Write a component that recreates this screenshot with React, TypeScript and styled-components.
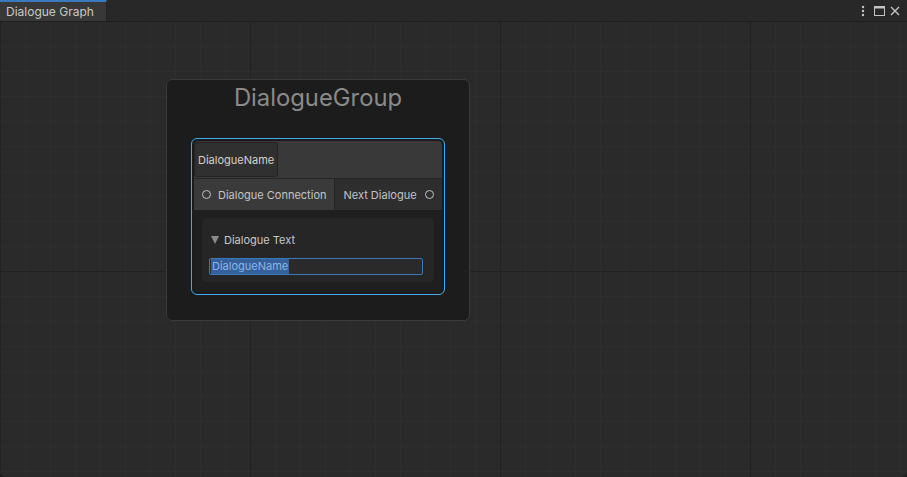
import styled, { createGlobalStyle } from 'styled-components';

const GlobalStyle = createGlobalStyle`
  html, body { margin: 0; padding: 0; height: 100%; background: #1d1d1d; overflow: hidden; }
  #root { height: 100%; }
  * { box-sizing: border-box; }
`;

// Editor window
const Window = styled.div`
  height: 100vh; display: flex; flex-direction: column;
  font-family: Inter, "Noto Sans", sans-serif; color: #c4c4c4;
  border-radius: 0 0 6px 6px; overflow: hidden;
`;
const TabBar = styled.div`
  height: 22px; flex: none; display: flex; align-items: stretch; justify-content: space-between;
  background: #282828; border-bottom: 1px solid #1f1f1f;
`;
const Tab = styled.div`
  width: 107px; display: flex; align-items: center; padding: 0 6px 0 6px;
  background: #383838; border-top: 2px solid #3a79bb; border-right: 1px solid #232323;
  font-size: 12px; color: #c8c8c8; white-space: nowrap;
`;
const Controls = styled.div` display: flex; align-items: center; gap: 4px; padding-right: 6px; `;
const IconBtn = styled.div` width: 12px; height: 12px; display: flex; align-items: center; justify-content: center; `;

const Canvas = styled.div`
  flex: 1; position: relative; background-color: #2a2a2a;
  background-image:
    linear-gradient(to right, #222222 1px, transparent 1px),
    linear-gradient(to bottom, #222222 1px, transparent 1px),
    linear-gradient(to right, #2d2d2d 1px, transparent 1px),
    linear-gradient(to bottom, #2d2d2d 1px, transparent 1px);
  background-size: 250px 250px, 250px 250px, 25px 25px, 25px 25px;
  background-position: 0 -1px, 0 -1px, 0 -1px, 0 -1px;
`;

// Group and node
const Group = styled.div`
  position: absolute; left: 166px; top: 57px; width: 304px;
  background: #1c1c1c; border: 1px solid #3a3a3a; border-radius: 6px;
  padding: 0 24px 25px 24px;
`;
const GroupTitle = styled.div`
  height: 35px; line-height: 35px; text-align: center;
  font-size: 23.8px; color: #8a8a8a; margin-bottom: 23px;
`;
const Node = styled.div`
  border: 1px solid #44aaf0; border-radius: 6px; padding: 1px; height: 157px;
`;
const NodeInner = styled.div`
  height: 100%; border: 1px solid #1a1a1a; border-radius: 5px; overflow: hidden;
  display: flex; flex-direction: column; background: #1f1f1f;
`;
const TitleBar = styled.div` height: 37px; flex: none; background: #393939; padding-top: 1px; display: flex; `;
const NameField = styled.div`
  height: 35px; padding: 0 3px; display: flex; align-items: center;
  background: #303030; border: 1px solid #232323; border-radius: 3px;
  font-size: 11px; color: #d2d2d2;
`;
const PortRow = styled.div`
  height: 32px; flex: none; display: flex; border-top: 1px solid #252525;
`;
const PortSide = styled.div<{ $out?: boolean }>`
  display: flex; align-items: center; gap: 7px; white-space: nowrap;
  background: ${p => (p.$out ? '#2e2e2e' : '#3a3a3a')};
  padding: 0 8px;
  flex: ${p => (p.$out ? '1' : 'none')};
  justify-content: ${p => (p.$out ? 'space-between' : 'flex-start')};
  border-left: ${p => (p.$out ? '1px solid #232323' : 'none')};
  font-size: 11px; color: #c4c4c4;
`;
const PortDot = styled.span`
  width: 9px; height: 9px; border-radius: 50%; border: 1.5px solid #c2c2c2; flex: none;
`;
const Body = styled.div` flex: 1; padding: 8px; `;
const Foldout = styled.div`
  height: 64px; background: #262626; border-radius: 4px; padding: 13px 11px 0 7px;
  display: flex; flex-direction: column; gap: 9px;
`;
const FoldHeader = styled.div`
  display: flex; align-items: center; gap: 5px; padding-left: 2px; height: 18px;
  font-size: 11px; color: #c8c8c8;
`;
const Triangle = styled.span`
  width: 0; height: 0; border-left: 4.5px solid transparent; border-right: 4.5px solid transparent;
  border-top: 8px solid #8a8a8a;
`;
const TextField = styled.div`
  height: 17px; border: 1px solid #3a79bb; border-radius: 2px; background: #2a2a2a;
  display: flex; align-items: center; padding-left: 1px;
`;
const Selection = styled.span`
  background: #36609a; color: #8fb3e6; font-size: 11px; line-height: 15px; padding: 0 1px;
`;

export default function App() {
  return (
    <>
      <GlobalStyle />
      <Window>
        <TabBar>
          <Tab>Dialogue Graph</Tab>
          <Controls>
            <IconBtn>
              <svg width="4" height="12" viewBox="0 0 4 12">
                <circle cx="2" cy="2" r="1.2" fill="#c4c4c4" />
                <circle cx="2" cy="6" r="1.2" fill="#c4c4c4" />
                <circle cx="2" cy="10" r="1.2" fill="#c4c4c4" />
              </svg>
            </IconBtn>
            <IconBtn>
              <svg width="11" height="10" viewBox="0 0 11 10">
                <rect x="0.5" y="0.5" width="10" height="9" fill="none" stroke="#c4c4c4" />
                <rect x="0.5" y="0.5" width="10" height="2" fill="#c4c4c4" />
              </svg>
            </IconBtn>
            <IconBtn>
              <svg width="10" height="10" viewBox="0 0 10 10">
                <path d="M1 1 L9 9 M9 1 L1 9" stroke="#c4c4c4" strokeWidth="1.4" />
              </svg>
            </IconBtn>
          </Controls>
        </TabBar>
        <Canvas>
          <Group>
            <GroupTitle>DialogueGroup</GroupTitle>
            <Node>
              <NodeInner>
                <TitleBar>
                  <NameField>DialogueName</NameField>
                </TitleBar>
                <PortRow>
                  <PortSide>
                    <PortDot />
                    Dialogue Connection
                  </PortSide>
                  <PortSide $out>
                    Next Dialogue
                    <PortDot />
                  </PortSide>
                </PortRow>
                <Body>
                  <Foldout>
                    <FoldHeader>
                      <Triangle />
                      Dialogue Text
                    </FoldHeader>
                    <TextField>
                      <Selection>DialogueName</Selection>
                    </TextField>
                  </Foldout>
                </Body>
              </NodeInner>
            </Node>
          </Group>
        </Canvas>
      </Window>
    </>
  );
}
